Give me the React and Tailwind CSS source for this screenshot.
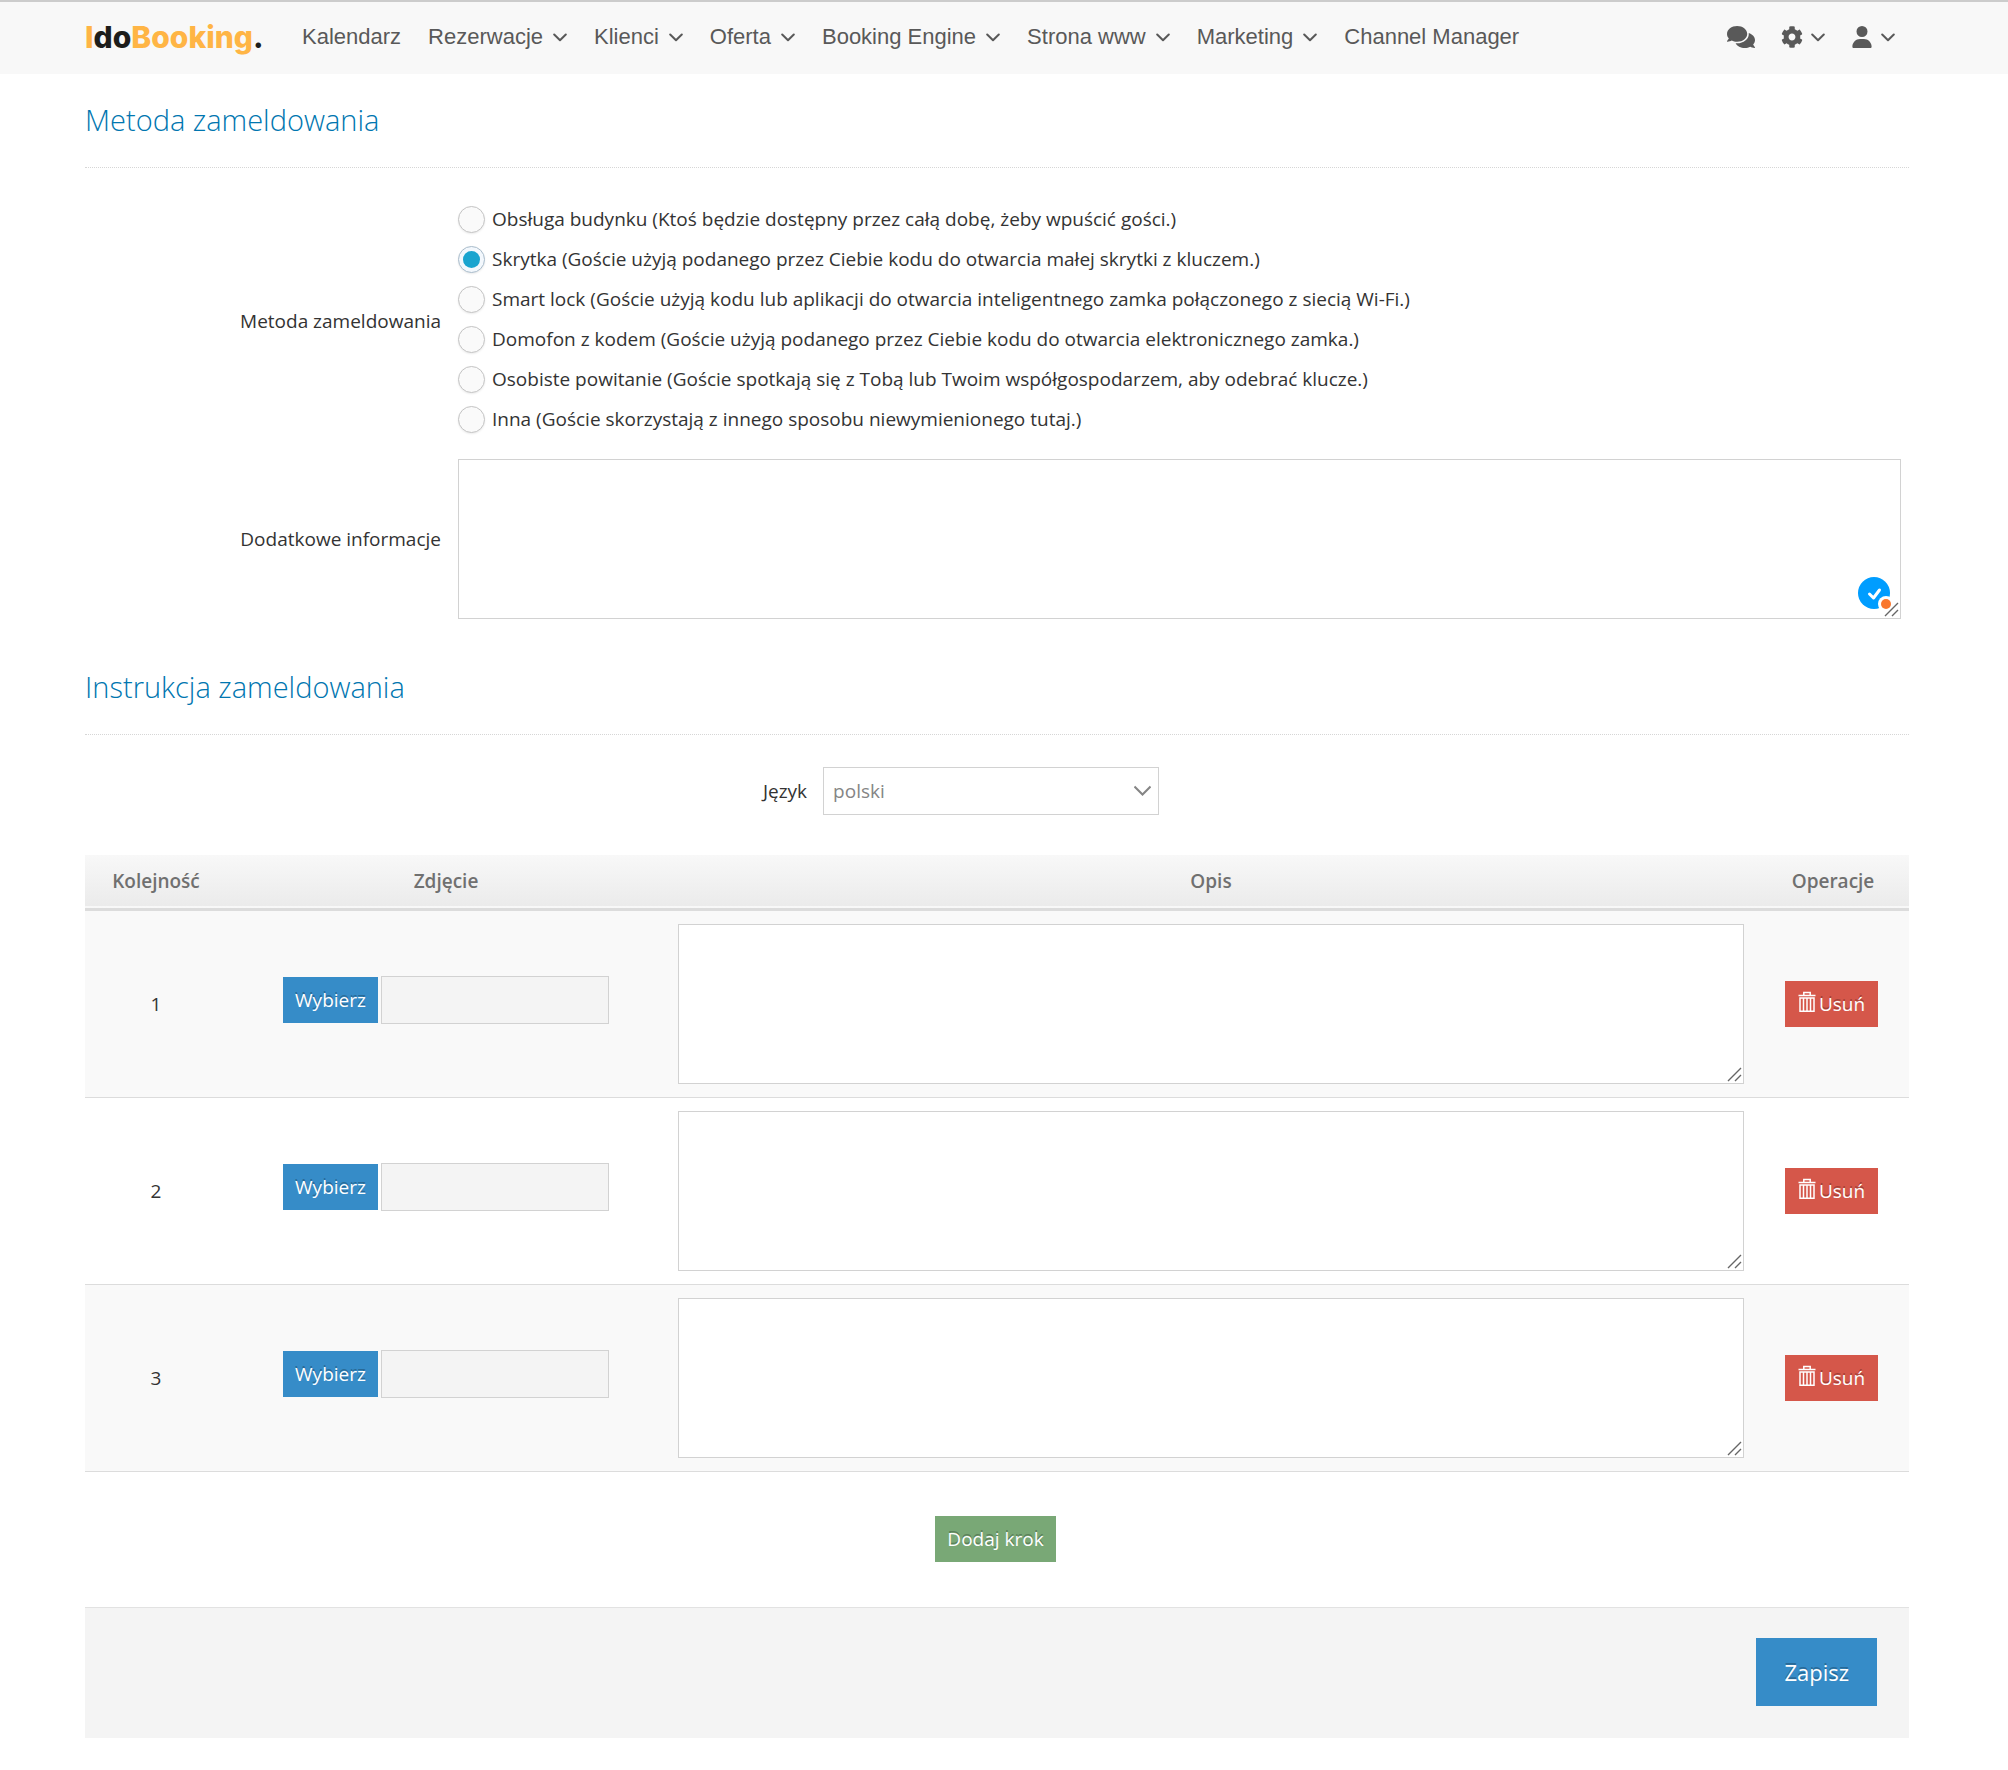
import React, { useState } from 'react';
import { FaComments, FaCog } from 'react-icons/fa';
import { FaUser } from 'react-icons/fa6';

const navItems = [
  { label: 'Kalendarz', menu: false },
  { label: 'Rezerwacje', menu: true },
  { label: 'Klienci', menu: true },
  { label: 'Oferta', menu: true },
  { label: 'Booking Engine', menu: true },
  { label: 'Strona www', menu: true },
  { label: 'Marketing', menu: true },
  { label: 'Channel Manager', menu: false },
];

const checkInMethods = [
  'Obsługa budynku (Ktoś będzie dostępny przez całą dobę, żeby wpuścić gości.)',
  'Skrytka (Goście użyją podanego przez Ciebie kodu do otwarcia małej skrytki z kluczem.)',
  'Smart lock (Goście użyją kodu lub aplikacji do otwarcia inteligentnego zamka połączonego z siecią Wi-Fi.)',
  'Domofon z kodem (Goście użyją podanego przez Ciebie kodu do otwarcia elektronicznego zamka.)',
  'Osobiste powitanie (Goście spotkają się z Tobą lub Twoim współgospodarzem, aby odebrać klucze.)',
  'Inna (Goście skorzystają z innego sposobu niewymienionego tutaj.)',
];

const Chevron = () => (
  <svg width="14" height="10" viewBox="0 0 14 10" fill="none" stroke="currentColor" strokeWidth="2" strokeLinecap="round" strokeLinejoin="round">
    <path d="M1.2 2.5 7 8.3 12.8 2.5" />
  </svg>
);

const TrashIcon = () => (
  <svg className="mb-1" width="18" height="22" viewBox="0 0 18 22" fill="none" stroke="currentColor" strokeWidth="1.5">
    <path d="M0.5 4.5H17.5M5.8 4V1.5H12.2V4M2 7V20.2H16V7ZM5.5 7V20M9 7V20M12.5 7V20" />
  </svg>
);

const SectionTitle = ({ children }) => (
  <h2 className="pb-[27px] border-b-1 border-dotted border-[#d6d6d6] text-[29px] leading-[40px] font-light text-[#0076b0]">
    {children}
  </h2>
);

// Textarea with its own resize grip in the corner
const TextArea = ({ id, label, children }) => (
  <div className="relative flex">
    <textarea
      id={id}
      aria-label={label}
      className="w-full h-40 p-2 bg-white border border-[#d2d2d2] resize-none outline-none"
    />
    {children}
    <svg className="absolute right-[2px] bottom-[2px] pointer-events-none" width="15" height="15" viewBox="0 0 15 15" stroke="#666" strokeWidth="1.4">
      <path d="M1 14 14 1M8 14 14 8" />
    </svg>
  </div>
);

const Header = () => (
  <header className="h-[74px] px-[85px] pb-[2px] flex items-center justify-between bg-[#f8f8f8] border-t-2 border-[#ccc] text-[#595959]">
    <div className="flex items-center">
      <a href="#" className="w-[217px] font-[Inter,sans-serif] text-[30px] leading-10 font-extrabold text-[#ffb545]">
        I<span className="text-[#1d1d1b]">do</span>Booking<span className="text-[#1d1d1b]">.</span>
      </a>
      <nav className="flex items-center gap-[27px] font-['Liberation_Sans',Arial,sans-serif] text-[22px] leading-8">
        {navItems.map((item) => (
          <a key={item.label} href="#" className="flex items-center gap-[10px] whitespace-nowrap">
            {item.label}
            {item.menu && <Chevron />}
          </a>
        ))}
      </nav>
    </div>
    <div className="pr-7 flex items-center gap-[26px]">
      <button aria-label="Wiadomości"><FaComments size={28} /></button>
      <button aria-label="Ustawienia" className="flex items-center gap-2"><FaCog size={22} /><Chevron /></button>
      <button aria-label="Konto" className="flex items-center gap-2"><FaUser size={22} /><Chevron /></button>
    </div>
  </header>
);

const StepRow = ({ number, onDelete }) => (
  <tr className="border-b border-[#dcdcdc] odd:bg-[#f9f9f9]">
    <td className="text-center">{number}</td>
    <td>
      <div className="pb-2 flex justify-center items-center gap-[3px]">
        <button className="h-[46px] px-3 bg-[#368cc8] text-white text-shadow-[0_-2px_0_rgb(0_0_0/0.25)]">Wybierz</button>
        <input type="text" readOnly aria-label={`Zdjęcie ${number}`} className="w-[228px] h-12 px-2 bg-[#f4f4f4] border border-[#d2d2d2]" />
      </div>
    </td>
    <td className="px-[13px] py-[13px]">
      <TextArea label={`Opis ${number}`} />
    </td>
    <td className="pr-[3px] text-center">
      <button
        onClick={onDelete}
        className="h-[46px] px-[13px] inline-flex items-center gap-[3px] bg-[#d5574a] text-white text-shadow-[0_-2px_0_rgb(0_0_0/0.25)]"
      >
        <TrashIcon />
        Usuń
      </button>
    </td>
  </tr>
);

const App = () => {
  const [method, setMethod] = useState(1);
  const [steps, setSteps] = useState([1, 2, 3]);

  return (
    <div className="min-h-screen bg-white font-['Open_Sans',sans-serif] text-[19px] leading-7 text-[#333]">
      <Header />
      <main className="pl-[85px] pr-[99px]">
        <section className="pt-[26px]">
          <SectionTitle>Metoda zameldowania</SectionTitle>
          <div className="pt-[31px] pr-2 grid grid-cols-[356px_1fr] gap-x-[17px] items-center">
            <div id="method-label" className="text-right">Metoda zameldowania</div>
            <div role="radiogroup" aria-labelledby="method-label" className="pb-[3px]">
              {checkInMethods.map((text, index) => (
                <label key={index} className="h-10 flex items-center gap-[7px]">
                  <input
                    type="radio"
                    name="method"
                    checked={method === index}
                    onChange={() => setMethod(index)}
                    className="peer sr-only"
                  />
                  <span className="size-[27px] flex shrink-0 items-center justify-center rounded-full border border-[#c4c4c4] bg-[#fafafa] shadow-[0_1px_2px_rgb(0_0_0/0.08)] peer-checked:border-[#a9bccb] peer-checked:bg-[#f3f8fd]">
                    {method === index && <span className="size-[17px] rounded-full bg-[#19a4cf]" />}
                  </span>
                  {text}
                </label>
              ))}
            </div>
          </div>
          <div className="pt-[17px] pr-2 grid grid-cols-[356px_1fr] gap-x-[17px] items-center">
            <label htmlFor="info" className="text-right">Dodatkowe informacje</label>
            <TextArea id="info">
              <svg className="absolute right-[7px] bottom-[9px]" width="36" height="36" viewBox="0 0 36 36" fill="none">
                <circle cx="16" cy="19" r="16" fill="#009dff" />
                <path d="m11.5 20 4 4 6-8" stroke="#fff" strokeWidth="3" strokeLinecap="round" strokeLinejoin="round" />
                <circle cx="28" cy="30" r="8" fill="#fff" />
                <circle cx="28" cy="30" r="5" fill="#f9772e" />
              </svg>
            </TextArea>
          </div>
        </section>

        <section className="pt-[48px]">
          <SectionTitle>Instrukcja zameldowania</SectionTitle>
          <div className="pt-8 pb-10 pr-[72px] flex justify-center items-center gap-4">
            <label htmlFor="language">Język</label>
            <div className="relative">
              <select id="language" className="w-[336px] h-12 px-[9px] appearance-none bg-white border border-[#d2d2d2] text-[#858585]">
                <option>polski</option>
              </select>
              <svg className="absolute right-2 top-[18px] pointer-events-none" width="17" height="12" viewBox="0 0 17 12" fill="none" stroke="#858585" strokeWidth="2">
                <path d="M0.5 1.5 8.5 9.5 16.5 1.5" />
              </svg>
            </div>
          </div>

          <table className="w-full table-fixed border-collapse">
            <colgroup>
              <col className="w-[142px]" />
              <col className="w-[438px]" />
              <col />
              <col className="w-[152px]" />
            </colgroup>
            <thead>
              <tr className="h-[54px] border-b-3 border-[#dcdcdc] bg-linear-to-b from-[#f8f8f8] to-[#ebebeb] text-[#707070]">
                <th className="font-semibold">Kolejność</th>
                <th className="font-semibold">Zdjęcie</th>
                <th className="font-semibold">Opis</th>
                <th className="font-semibold">Operacje</th>
              </tr>
            </thead>
            <tbody>
              {steps.map((step, index) => (
                <StepRow
                  key={step}
                  number={index + 1}
                  onDelete={() => setSteps(steps.filter((s) => s !== step))}
                />
              ))}
            </tbody>
          </table>

          <div className="pt-11 pb-[45px] pr-[3px] flex justify-center">
            <button
              onClick={() => setSteps([...steps, Date.now()])}
              className="h-[46px] px-3 bg-[#79a876] text-white text-shadow-[0_-2px_0_rgb(0_0_0/0.25)]"
            >
              Dodaj krok
            </button>
          </div>
        </section>

        <footer className="px-8 pt-[30px] pb-8 flex justify-end bg-[#f4f4f4] border-t border-[#e2e2e2]">
          <button className="h-[68px] px-7 bg-[#368cc8] text-[22px] text-white text-shadow-[0_-2px_0_rgb(0_0_0/0.25)]">
            Zapisz
          </button>
        </footer>
      </main>
    </div>
  );
};

export default App;
